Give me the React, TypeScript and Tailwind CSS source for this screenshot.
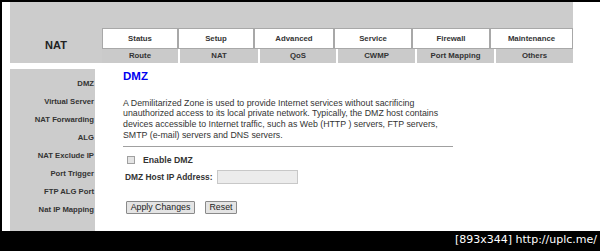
import React from 'react';

const topTabs = [
  { label: 'Status', w: 'w-[76px]' },
  { label: 'Setup', w: 'w-[76px]' },
  { label: 'Advanced', w: 'w-[80px]' },
  { label: 'Service', w: 'w-[78px]' },
  { label: 'Firewall', w: 'w-[78px]' },
  { label: 'Maintenance', w: 'w-[83px]' },
];

const subTabs = [
  { label: 'Route', w: 'w-[76px]' },
  { label: 'NAT', w: 'w-[78px]' },
  { label: 'QoS', w: 'w-[76px]' },
  { label: 'CWMP', w: 'w-[77px]' },
  { label: 'Port Mapping', w: 'w-[77px]' },
  { label: 'Others', w: 'w-[77px]' },
];

const sideItems = [
  'DMZ',
  'Virtual Server',
  'NAT Forwarding',
  'ALG',
  'NAT Exclude IP',
  'Port Trigger',
  'FTP ALG Port',
  'Nat IP Mapping',
];

const App = () => {
  return (
    <div className="w-[600px] h-[251px] bg-black flex flex-col pt-[2px] pl-[2px] overflow-hidden font-['Liberation_Sans',Arial,sans-serif] text-[#333]">
      <div className="h-[229px] bg-white pl-[8px] flex flex-col">
        {/* Header */}
        <div className="w-[563px] h-[61px] bg-[#cccccc] pt-[26px] flex">
          <div className="w-[92px] flex items-center justify-center text-[11px] font-bold text-[#222]">
            NAT
          </div>
          <div className="flex flex-col">
            <div className="flex h-[21px]">
              {topTabs.map((t) => (
                <div
                  key={t.label}
                  className={`${t.w} h-full bg-white border border-[#a8a8a8] flex items-center justify-center text-[7.8px] font-bold`}
                >
                  {t.label}
                </div>
              ))}
            </div>
            <div className="flex h-[14px] gap-[2px] bg-white">
              {subTabs.map((t) => (
                <div
                  key={t.label}
                  className={`${t.w} h-full bg-[#cacaca] flex items-center justify-center text-[7.8px] font-bold`}
                >
                  {t.label}
                </div>
              ))}
            </div>
          </div>
        </div>

        {/* Body */}
        <div className="flex mt-[6px] flex-1">
          <div className="w-[85px] bg-[#cccccc] pt-[6px] pr-[1px]">
            {sideItems.map((s) => (
              <div key={s} className="h-[18px] leading-[18px] text-right whitespace-nowrap text-[7.7px] font-bold">
                {s}
              </div>
            ))}
          </div>

          <div className="pl-[28px] flex flex-col">
            <h1 className="mt-[2px] text-[11.5px] leading-[11.5px] font-bold text-[#0000f0]">DMZ</h1>
            <p className="mt-[15px] w-[340px] text-[8.8px] leading-[10.67px] text-[#333]">
              A Demilitarized Zone is used to provide Internet services without sacrificing
              <br />
              unauthorized access to its local private network. Typically, the DMZ host contains
              <br />
              devices accessible to Internet traffic, such as Web (HTTP ) servers, FTP servers,
              <br />
              SMTP (e-mail) servers and DNS servers.
            </p>
            <div className="mt-[6px] w-[330px] border-t border-[#a0a0a0]" />

            <div className="mt-[7px] h-[12px] flex items-center ml-[4px]">
              <span className="w-[8px] h-[8px] border border-[#a0a0a0] bg-[#e4e4e4]" />
              <span className="ml-[8px] text-[8.7px] font-bold">Enable DMZ</span>
            </div>

            <div className="mt-[4px] h-[14px] flex items-center ml-[2px]">
              <span className="text-[8.4px] font-bold">DMZ Host IP Address:</span>
              <div className="ml-[5px] w-[81px] h-[14px] bg-[#ececec] border border-[#c8c8c8]" />
            </div>

            <div className="mt-[17px] flex ml-[3px] gap-[10px]">
              <button className="w-[69px] h-[13px] bg-[#e4e4e4] border border-[#8a8a8a] rounded-[1px] text-[8.8px] leading-[11px] text-[#222]">
                Apply Changes
              </button>
              <button className="w-[32px] h-[13px] bg-[#e4e4e4] border border-[#8a8a8a] rounded-[1px] text-[8.8px] leading-[11px] text-[#222]">
                Reset
              </button>
            </div>
          </div>
        </div>
      </div>

      {/* Bottom caption */}
      <div className="flex-1 flex items-center justify-end pr-[3px] pb-[2px] text-white text-[11px] font-['DejaVu_Sans',sans-serif]">
        [893x344] http://uplc.me/
      </div>
    </div>
  );
};

export default App;
